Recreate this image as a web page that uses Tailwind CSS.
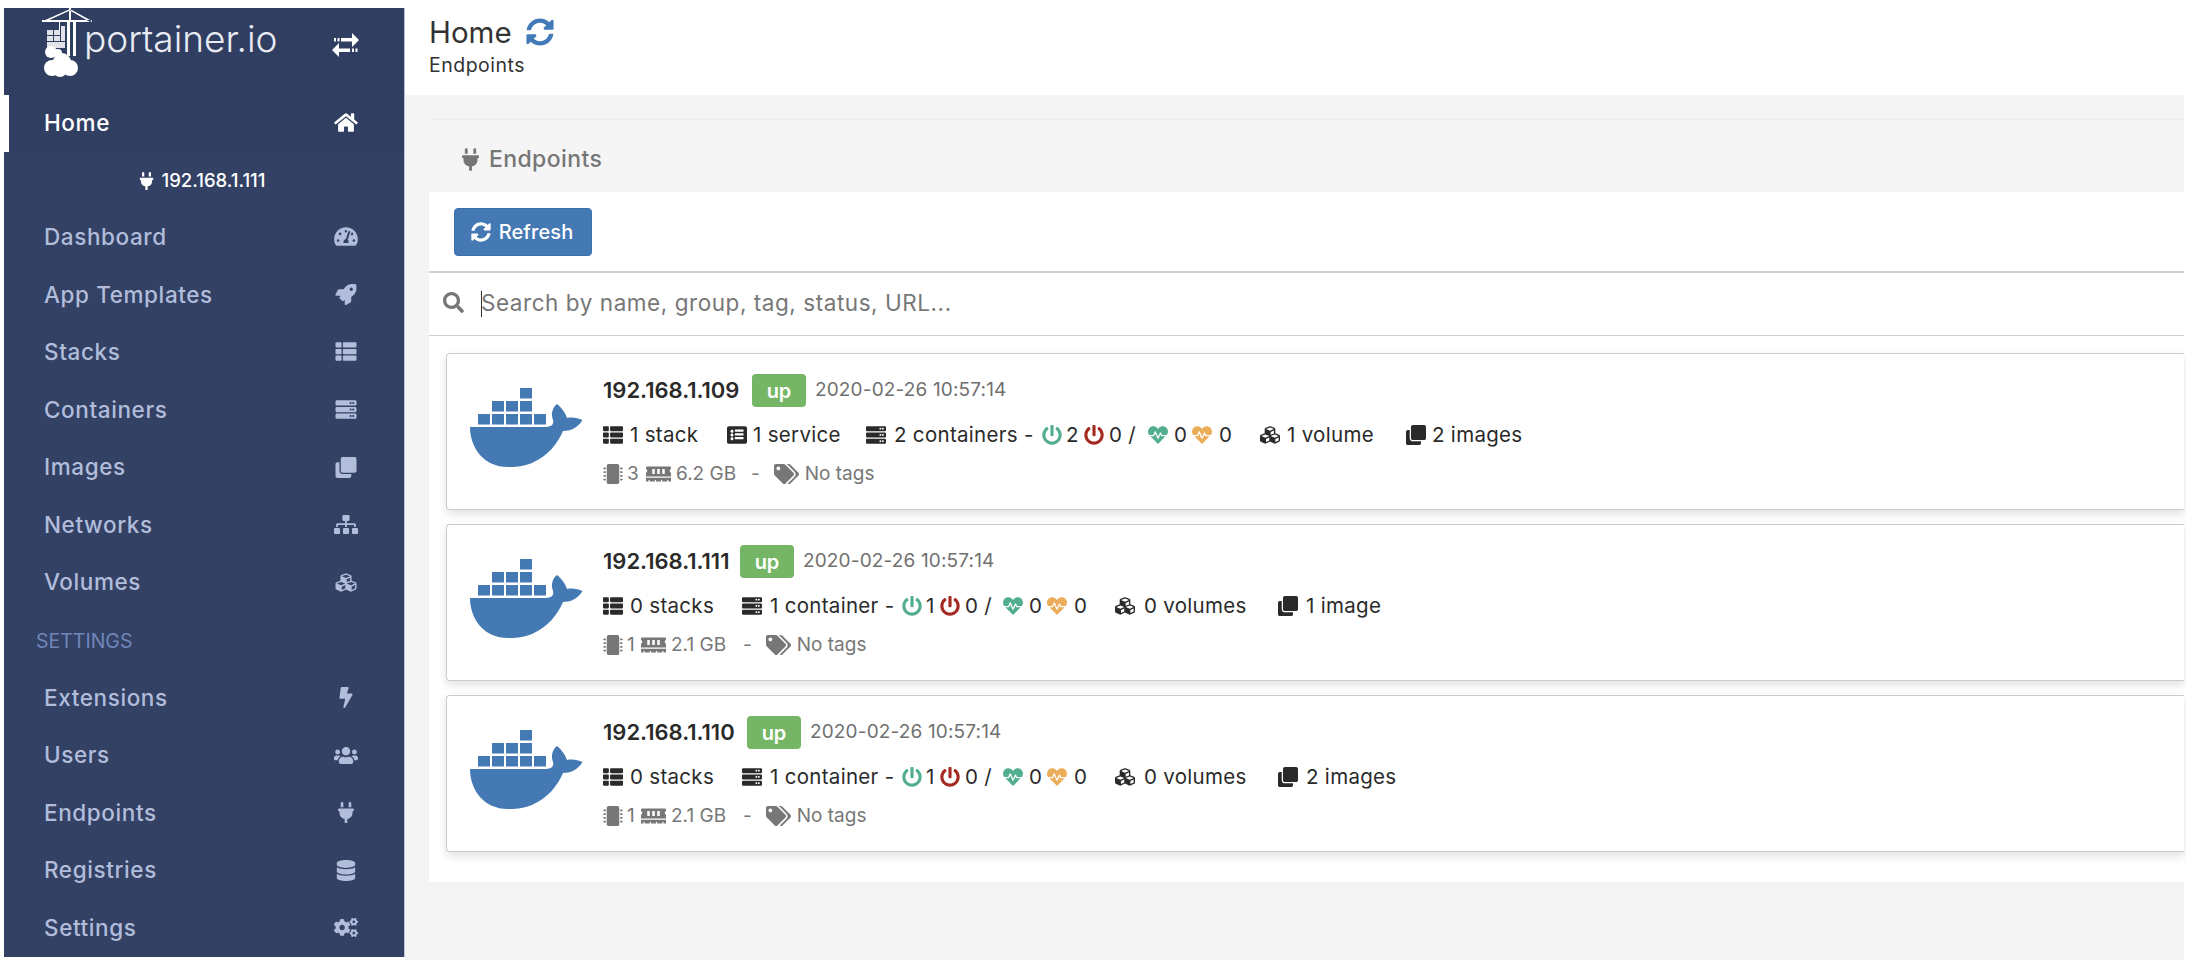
<!DOCTYPE html>
<html lang="en">
<head>
<meta charset="UTF-8">
<title>Portainer</title>
<script src="https://cdn.jsdelivr.net/npm/@tailwindcss/browser@4"></script>
</head>
<body class="bg-white [font-family:Inter,sans-serif] overflow-hidden">
<!-- icon sprite -->
<svg class="hidden">
<symbol id="home" viewBox="0 0 576 512"><path d="M280.37 148.26L96 300.11V464a16 16 0 0 0 16 16l112.06-.29a16 16 0 0 0 15.92-16V368a16 16 0 0 1 16-16h64a16 16 0 0 1 16 16v95.64a16 16 0 0 0 16 16.05L464 480a16 16 0 0 0 16-16V300L295.67 148.26a12.19 12.19 0 0 0-15.3 0zM571.6 251.47L488 182.56V44.05a12 12 0 0 0-12-12h-56a12 12 0 0 0-12 12v72.61L318.47 43a48 48 0 0 0-61 0L4.34 251.47a12 12 0 0 0-1.6 16.9l25.5 31A12 12 0 0 0 45.15 301l235.22-193.74a12.19 12.19 0 0 1 15.3 0L530.9 301a12 12 0 0 0 16.9-1.6l25.5-31a12 12 0 0 0-1.7-16.93z"/></symbol>
<symbol id="plug" viewBox="0 0 384 512"><path d="M320,32a32,32,0,0,0-64,0v96h64Zm48,128H16A16,16,0,0,0,0,176v32a16,16,0,0,0,16,16H32v32A160.07,160.07,0,0,0,160,412.8V512h64V412.8A160.07,160.07,0,0,0,352,256V224h16a16,16,0,0,0,16-16V176A16,16,0,0,0,368,160ZM128,32a32,32,0,0,0-64,0v96h64Z"/></symbol>
<symbol id="sync" viewBox="0 0 512 512"><path d="M370.72 133.28C339.458 104.008 298.888 87.962 255.848 88c-77.458.068-144.328 53.178-162.791 126.85-1.344 5.363-6.122 9.15-11.651 9.15H24.103c-7.498 0-13.194-6.807-11.807-14.176C33.933 94.924 134.813 8 256 8c66.448 0 126.791 26.136 171.315 68.685L463.03 40.97C478.149 25.851 504 36.559 504 57.941V192c0 13.255-10.745 24-24 24H345.941c-21.382 0-32.09-25.851-16.971-40.971l41.75-41.749zM32 296h134.059c21.382 0 32.09 25.851 16.971 40.971l-41.75 41.75c31.262 29.273 71.835 45.319 114.876 45.28 77.418-.07 144.315-53.144 162.787-126.849 1.344-5.363 6.122-9.15 11.651-9.15h57.304c7.498 0 13.194 6.807 11.807 14.176C478.067 417.076 377.187 504 256 504c-66.448 0-126.791-26.136-171.315-68.685L48.97 471.03C33.851 486.149 8 475.441 8 454.059V320c0-13.255 10.745-24 24-24z"/></symbol>
<symbol id="search" viewBox="0 0 512 512"><path d="M505 442.7L405.3 343c-4.5-4.5-10.6-7-17-7H372c27.6-35.3 44-79.7 44-128C416 93.1 322.9 0 208 0S0 93.1 0 208s93.1 208 208 208c48.3 0 92.7-16.4 128-44v16.3c0 6.4 2.5 12.5 7 17l99.7 99.7c9.4 9.4 24.6 9.4 33.9 0l28.3-28.3c9.4-9.4 9.4-24.6.1-34zM208 336c-70.7 0-128-57.2-128-128 0-70.7 57.2-128 128-128 70.7 0 128 57.2 128 128 0 70.7-57.2 128-128 128z"/></symbol>
<symbol id="thlist" viewBox="0 0 512 512"><path d="M149.333 216v80c0 13.255-10.745 24-24 24H24c-13.255 0-24-10.745-24-24v-80c0-13.255 10.745-24 24-24h101.333c13.255 0 24 10.745 24 24zM0 376v80c0 13.255 10.745 24 24 24h101.333c13.255 0 24-10.745 24-24v-80c0-13.255-10.745-24-24-24H24c-13.255 0-24 10.745-24 24zM125.333 32H24C10.745 32 0 42.745 0 56v80c0 13.255 10.745 24 24 24h101.333c13.255 0 24-10.745 24-24V56c0-13.255-10.745-24-24-24zm80 448H488c13.255 0 24-10.745 24-24v-80c0-13.255-10.745-24-24-24H205.333c-13.255 0-24 10.745-24 24v80c0 13.255 10.745 24 24 24zm-24-424v80c0 13.255 10.745 24 24 24H488c13.255 0 24-10.745 24-24V56c0-13.255-10.745-24-24-24H205.333c-13.255 0-24 10.745-24 24zm24 264H488c13.255 0 24-10.745 24-24v-80c0-13.255-10.745-24-24-24H205.333c-13.255 0-24 10.745-24 24v80c0 13.255 10.745 24 24 24z"/></symbol>
<symbol id="server" viewBox="0 0 512 512"><path d="M480 160H32c-17.673 0-32-14.327-32-32V64c0-17.673 14.327-32 32-32h448c17.673 0 32 14.327 32 32v64c0 17.673-14.327 32-32 32zm-48-88c-13.255 0-24 10.745-24 24s10.745 24 24 24 24-10.745 24-24-10.745-24-24-24zm-64 0c-13.255 0-24 10.745-24 24s10.745 24 24 24 24-10.745 24-24-10.745-24-24-24zm112 248H32c-17.673 0-32-14.327-32-32v-64c0-17.673 14.327-32 32-32h448c17.673 0 32 14.327 32 32v64c0 17.673-14.327 32-32 32zm-48-88c-13.255 0-24 10.745-24 24s10.745 24 24 24 24-10.745 24-24-10.745-24-24-24zm-64 0c-13.255 0-24 10.745-24 24s10.745 24 24 24 24-10.745 24-24-10.745-24-24-24zm112 248H32c-17.673 0-32-14.327-32-32v-64c0-17.673 14.327-32 32-32h448c17.673 0 32 14.327 32 32v64c0 17.673-14.327 32-32 32zm-48-88c-13.255 0-24 10.745-24 24s10.745 24 24 24 24-10.745 24-24-10.745-24-24-24zm-64 0c-13.255 0-24 10.745-24 24s10.745 24 24 24 24-10.745 24-24-10.745-24-24-24z"/></symbol>
<symbol id="clone" viewBox="0 0 512 512"><path d="M464 0c26.51 0 48 21.49 48 48v288c0 26.51-21.49 48-48 48H176c-26.51 0-48-21.49-48-48V48c0-26.51 21.49-48 48-48h288M176 416c-44.112 0-80-35.888-80-80V128H48c-26.51 0-48 21.49-48 48v288c0 26.51 21.49 48 48 48h288c26.51 0 48-21.49 48-48v-48H176z"/></symbol>
<symbol id="sitemap" viewBox="0 0 640 512"><path d="M128 352H32c-17.67 0-32 14.33-32 32v96c0 17.67 14.33 32 32 32h96c17.67 0 32-14.33 32-32v-96c0-17.67-14.33-32-32-32zm-24-80h192v48h48v-48h192v48h48v-57.59c0-21.17-17.23-38.41-38.41-38.41H344v-64h40c17.67 0 32-14.33 32-32V32c0-17.67-14.33-32-32-32H256c-17.67 0-32 14.33-32 32v96c0 17.67 14.33 32 32 32h40v64H94.41C73.23 224 56 241.23 56 262.41V320h48v-48zm264 80h-96c-17.67 0-32 14.33-32 32v96c0 17.67 14.33 32 32 32h96c17.67 0 32-14.33 32-32v-96c0-17.67-14.33-32-32-32zm240 0h-96c-17.67 0-32 14.33-32 32v96c0 17.67 14.33 32 32 32h96c17.67 0 32-14.33 32-32v-96c0-17.67-14.33-32-32-32z"/></symbol>
<symbol id="bolt" viewBox="0 0 320 512"><path d="M296 160H180.6l42.6-129.8C227.2 15 215.7 0 200 0H56C44 0 33.8 8.9 32.2 20.8l-32 240C-1.7 275.2 9.5 288 24 288h118.7L96.6 482.5c-3.6 15.2 8 29.5 23.3 29.5 8.4 0 16.4-4.4 20.8-12l176-304c9.3-15.9-2.2-36-20.7-36z"/></symbol>
<symbol id="users" viewBox="0 0 640 512"><path d="M96 224c35.3 0 64-28.7 64-64s-28.7-64-64-64-64 28.7-64 64 28.7 64 64 64zm448 0c35.3 0 64-28.7 64-64s-28.7-64-64-64-64 28.7-64 64 28.7 64 64 64zm32 32h-64c-17.6 0-33.5 7.1-45.1 18.6 40.3 22.1 68.9 62 75.1 109.4h66c17.7 0 32-14.3 32-32v-32c0-35.3-28.7-64-64-64zm-256 0c61.9 0 112-50.1 112-112S381.9 32 320 32 208 82.1 208 144s50.1 112 112 112zm76.8 32h-8.3c-20.8 10-43.9 16-68.5 16s-47.6-6-68.5-16h-8.3C179.6 288 128 339.6 128 403.2V432c0 26.5 21.5 48 48 48h288c26.5 0 48-21.5 48-48v-28.8c0-63.6-51.6-115.2-115.2-115.2zm-223.7-13.4C161.5 263.1 145.6 256 128 256H64c-35.3 0-64 28.7-64 64v32c0 17.7 14.3 32 32 32h65.9c6.3-47.4 34.9-87.3 75.2-109.4z"/></symbol>
<symbol id="database" viewBox="0 0 448 512"><path d="M448 73.143v45.714C448 159.143 347.667 192 224 192S0 159.143 0 118.857V73.143C0 32.857 100.333 0 224 0s224 32.857 224 73.143zM448 176v102.857C448 319.143 347.667 352 224 352S0 319.143 0 278.857V176c48.125 33.143 136.208 48.572 224 48.572S399.874 209.143 448 176zm0 160v102.857C448 479.143 347.667 512 224 512S0 479.143 0 438.857V336c48.125 33.143 136.208 48.572 224 48.572S399.874 369.143 448 336z"/></symbol>
<symbol id="rocket" viewBox="0 0 512 512"><path d="M505.05 19.1a15.89 15.89 0 0 0-12.2-12.2C460.65 0 435.46 0 410.36 0c-103.2 0-165.1 55.2-211.29 128H94.87A48 48 0 0 0 52 154.49l-49.42 98.8A24 24 0 0 0 24.07 288h103.77l-22.47 22.47a32 32 0 0 0 0 45.25l50.9 50.91a32 32 0 0 0 45.26 0L224 384.16V488a24 24 0 0 0 34.7 21.49l98.7-49.39a47.91 47.91 0 0 0 26.5-42.9V312.79c72.59-46.3 128-108.4 128-211.09.1-25.2.1-50.4-6.85-82.6zM384 168a40 40 0 1 1 40-40 40 40 0 0 1-40 40z"/></symbol>
<symbol id="tacho" viewBox="0 0 576 512"><path d="M288 32C128.94 32 0 160.94 0 320c0 52.8 14.25 102.26 39.06 144.8 5.61 9.62 16.3 15.2 27.44 15.2h443c11.14 0 21.83-5.58 27.44-15.2C561.75 422.26 576 372.8 576 320c0-159.06-128.94-288-288-288zm0 64c14.71 0 26.58 10.13 30.32 23.65-1.11 2.26-2.64 4.23-3.45 6.67l-9.22 27.67c-5.13 3.49-10.97 6.01-17.64 6.01-17.67 0-32-14.33-32-32S270.33 96 288 96zM96 384c-17.67 0-32-14.33-32-32s14.33-32 32-32 32 14.33 32 32-14.33 32-32 32zm48-160c-17.67 0-32-14.33-32-32s14.33-32 32-32 32 14.33 32 32-14.33 32-32 32zm246.77-72.41l-61.33 184C343.13 347.33 352 364.54 352 384c0 11.72-3.38 22.55-8.88 32H232.88c-5.5-9.45-8.88-20.28-8.88-32 0-33.94 26.5-61.43 59.9-63.59l61.34-184.01c4.17-12.56 17.73-19.45 30.36-15.17 12.57 4.19 19.35 17.79 15.17 30.36zm14.66 57.2l15.52-46.55c3.47-1.29 7.13-2.23 11.05-2.23 17.67 0 32 14.33 32 32s-14.33 32-32 32c-11.38-.01-20.89-6.28-26.57-15.22zM480 384c-17.67 0-32-14.33-32-32s14.33-32 32-32 32 14.33 32 32-14.33 32-32 32z"/></symbol>
<symbol id="cubes" viewBox="0 0 512 512"><path d="M488.6 250.2L392 214V105.5c0-15-9.3-28.4-23.4-33.7l-100-37.5c-8.1-3.1-17.1-3.1-25.3 0l-100 37.5c-14.1 5.3-23.4 18.7-23.4 33.7V214l-96.6 36.2C9.3 255.5 0 268.9 0 283.9V394c0 13.6 7.7 26.1 19.9 32.2l100 50c10.1 5.1 22.1 5.1 32.2 0l103.9-52 103.9 52c10.1 5.1 22.1 5.1 32.2 0l100-50c12.2-6.1 19.9-18.6 19.9-32.2V283.9c0-15-9.3-28.4-23.4-33.7zM358 214.8l-85 31.9v-68.2l85-37v73.3zM154 104.1l102-38.2 102 38.2v.6l-102 41.4-102-41.4v-.6zm84 291.1l-85 42.5v-79.1l85-38.8v75.4zm0-112l-102 41.4-102-41.4v-.6l102-38.2 102 38.2v.6zm240 112l-85 42.5v-79.1l85-38.8v75.4zm0-112l-102 41.4-102-41.4v-.6l102-38.2 102 38.2v.6z"/></symbol>
<symbol id="cogs" viewBox="0 0 640 512"><path d="M512.1 191l-8.2 14.3c-3 5.3-9.4 7.5-15.1 5.4-11.8-4.4-22.6-10.7-32.1-18.6-4.6-3.8-5.8-10.5-2.8-15.7l8.2-14.3c-6.9-8-12.3-17.3-15.9-27.4h-16.5c-6 0-11.2-4.3-12.2-10.3-2-12-2.1-24.6 0-37.1 1-6 6.2-10.4 12.2-10.4h16.5c3.6-10.1 9-19.4 15.9-27.4l-8.2-14.3c-3-5.2-1.9-11.9 2.8-15.7 9.5-7.9 20.4-14.2 32.1-18.6 5.7-2.1 12.1.1 15.1 5.4l8.2 14.3c10.5-1.9 21.2-1.9 31.7 0L552 6.3c3-5.3 9.4-7.5 15.1-5.4 11.8 4.4 22.6 10.7 32.1 18.6 4.6 3.8 5.8 10.5 2.8 15.7l-8.2 14.3c6.9 8 12.3 17.3 15.9 27.4h16.5c6 0 11.2 4.3 12.2 10.3 2 12 2.1 24.6 0 37.1-1 6-6.2 10.4-12.2 10.4h-16.5c-3.6 10.1-9 19.4-15.9 27.4l8.2 14.3c3 5.2 1.9 11.9-2.8 15.7-9.5 7.9-20.4 14.2-32.1 18.6-5.7 2.1-12.1-.1-15.1-5.4l-8.2-14.3c-10.4 1.9-21.2 1.9-31.7 0zm-10.5-58.8c38.5 29.6 82.4-14.3 52.8-52.8-38.5-29.7-82.4 14.3-52.8 52.8zM386.3 286.1l33.7 16.8c10.1 5.8 14.5 18.1 10.5 29.1-8.9 24.2-26.4 46.4-42.6 65.8-7.4 8.9-20.2 11.1-30.3 5.3l-29.1-16.8c-16 13.7-34.6 24.6-54.9 31.7v33.6c0 11.6-8.3 21.6-19.7 23.6-24.6 4.2-50.4 4.4-75.9 0-11.5-2-20-11.9-20-23.6V418c-20.3-7.2-38.9-18-54.9-31.7L74 403c-10 5.8-22.9 3.6-30.3-5.3-16.2-19.4-33.3-41.6-42.2-65.7-4-10.9.4-23.2 10.5-29.1l33.3-16.8c-3.9-20.9-3.9-42.4 0-63.4L12 205.8c-10.1-5.8-14.6-18.1-10.5-29 8.9-24.2 26-46.4 42.2-65.8 7.4-8.9 20.2-11.1 30.3-5.3l29.1 16.8c16-13.7 34.6-24.6 54.9-31.7V57.1c0-11.5 8.2-21.5 19.6-23.5 24.6-4.2 50.5-4.4 76-.1 11.5 2 20 11.9 20 23.6v33.6c20.3 7.2 38.9 18 54.9 31.7l29.1-16.8c10-5.8 22.9-3.6 30.3 5.3 16.2 19.4 33.2 41.6 42.1 65.8 4 10.9.1 23.2-10 29.1l-33.7 16.8c3.9 21 3.9 42.5 0 63.5zm-117.6 21.1c59.2-77-28.7-164.9-105.7-105.7-59.2 77 28.7 164.9 105.7 105.7zm243.4 182.7l-8.2 14.3c-3 5.3-9.4 7.5-15.1 5.4-11.8-4.4-22.6-10.7-32.1-18.6-4.6-3.8-5.8-10.5-2.8-15.7l8.2-14.3c-6.9-8-12.3-17.3-15.9-27.4h-16.5c-6 0-11.2-4.3-12.2-10.3-2-12-2.1-24.6 0-37.1 1-6 6.2-10.4 12.2-10.4h16.5c3.6-10.1 9-19.4 15.9-27.4l-8.2-14.3c-3-5.2-1.9-11.9 2.8-15.7 9.5-7.9 20.4-14.2 32.1-18.6 5.7-2.1 12.1.1 15.1 5.4l8.2 14.3c10.5-1.9 21.2-1.9 31.7 0l8.2-14.3c3-5.3 9.4-7.5 15.1-5.4 11.8 4.4 22.6 10.7 32.1 18.6 4.6 3.8 5.8 10.5 2.8 15.7l-8.2 14.3c6.9 8 12.3 17.3 15.9 27.4h16.5c6 0 11.2 4.3 12.2 10.3 2 12 2.1 24.6 0 37.1-1 6-6.2 10.4-12.2 10.4h-16.5c-3.6 10.1-9 19.4-15.9 27.4l8.2 14.3c3 5.2 1.9 11.9-2.8 15.7-9.5 7.9-20.4 14.2-32.1 18.6-5.7 2.1-12.1-.1-15.1-5.4l-8.2-14.3c-10.4 1.9-21.2 1.9-31.7 0zM501.6 431c38.5 29.6 82.4-14.3 52.8-52.8-38.5-29.6-82.4 14.3-52.8 52.8z"/></symbol>
<symbol id="power" viewBox="0 0 512 512"><path d="M400 54.1c63 45 104 118.6 104 201.9 0 136.8-110.8 247.7-247.5 248C120 504.3 8.2 393 8 256.4 7.9 173.1 48.9 99.3 111.8 54.2c11.7-8.3 28-4.8 35 7.7L162.6 90c5.9 10.5 3.1 23.8-6.6 31-41.5 30.8-68 79.6-68 134.9-.1 92.3 74.5 168.1 168 168.1 91.6 0 168.6-74.2 168-169.1-.3-51.8-24.7-101.8-68.1-134-9.7-7.2-12.4-20.5-6.5-30.9l15.8-28.1c7-12.4 23.2-16.1 34.8-7.8zM296 264V24c0-13.3-10.7-24-24-24h-32c-13.3 0-24 10.7-24 24v240c0 13.3 10.7 24 24 24h32c13.3 0 24-10.7 24-24z"/></symbol>
<symbol id="heart" viewBox="0 0 512 512"><path d="M320.2 243.8l-49.7 99.4c-6 12.1-23.4 11.7-28.9-.6l-56.9-126.3-30 71.7H60.6l182.5 186.5c7.1 7.3 18.6 7.3 25.7 0L451.4 288H342.3l-22.1-44.2zM473.7 73.9l-2.4-2.5c-51.5-52.6-135.8-52.6-187.4 0L256 100l-27.9-28.5c-51.5-52.7-135.9-52.7-187.4 0l-2.4 2.4C-10.4 123.7-12.5 203 31 256h102.4l35.9-86.2c5.4-12.9 23.6-13.2 29.4-.4l58.2 129.3 49-97.9c5.9-11.8 22.7-11.8 28.6 0l27.6 55.2H481c43.5-53 41.4-132.3-7.3-182.1z"/></symbol>
<symbol id="tags" viewBox="0 0 640 512"><path d="M497.941 225.941L286.059 14.059A48 48 0 0 0 252.118 0H48C21.49 0 0 21.49 0 48v204.118a48 48 0 0 0 14.059 33.941l211.882 211.882c18.744 18.745 49.136 18.746 67.882 0l204.118-204.118c18.745-18.745 18.745-49.137 0-67.882zM112 160c-26.51 0-48-21.49-48-48s21.49-48 48-48 48 21.49 48 48-21.49 48-48 48zm513.941 133.823L421.823 497.941c-18.745 18.745-49.137 18.745-67.882 0l-.36-.36L527.64 323.522c16.999-16.999 26.36-39.6 26.36-63.64s-9.362-46.641-26.36-63.64L331.397 0h48.721a48 48 0 0 1 33.941 14.059l211.882 211.882c18.745 18.745 18.745 49.137 0 67.882z"/></symbol>
<symbol id="chip" viewBox="0 0 512 512"><path d="M416 48v416c0 26.51-21.49 48-48 48H144c-26.51 0-48-21.49-48-48V48c0-26.51 21.49-48 48-48h224c26.51 0 48 21.49 48 48zm96 58v12a6 6 0 0 1-6 6h-18v6a6 6 0 0 1-6 6h-42V88h42a6 6 0 0 1 6 6v6h18a6 6 0 0 1 6 6zm0 96v12a6 6 0 0 1-6 6h-18v6a6 6 0 0 1-6 6h-42v-48h42a6 6 0 0 1 6 6v6h18a6 6 0 0 1 6 6zm0 96v12a6 6 0 0 1-6 6h-18v6a6 6 0 0 1-6 6h-42v-48h42a6 6 0 0 1 6 6v6h18a6 6 0 0 1 6 6zm0 96v12a6 6 0 0 1-6 6h-18v6a6 6 0 0 1-6 6h-42v-48h42a6 6 0 0 1 6 6v6h18a6 6 0 0 1 6 6zM30 376h42v48H30a6 6 0 0 1-6-6v-6H6a6 6 0 0 1-6-6v-12a6 6 0 0 1 6-6h18v-6a6 6 0 0 1 6-6zm0-96h42v48H30a6 6 0 0 1-6-6v-6H6a6 6 0 0 1-6-6v-12a6 6 0 0 1 6-6h18v-6a6 6 0 0 1 6-6zm0-96h42v48H30a6 6 0 0 1-6-6v-6H6a6 6 0 0 1-6-6v-12a6 6 0 0 1 6-6h18v-6a6 6 0 0 1 6-6zm0-96h42v48H30a6 6 0 0 1-6-6v-6H6a6 6 0 0 1-6-6v-12a6 6 0 0 1 6-6h18v-6a6 6 0 0 1 6-6z"/></symbol>
<symbol id="memory" viewBox="0 0 640 512"><path d="M640 130.94V96c0-17.67-14.33-32-32-32H32C14.33 64 0 78.33 0 96v34.94c18.6 6.61 32 24.19 32 45.06s-13.4 38.45-32 45.06V320h640v-98.94c-18.6-6.61-32-24.19-32-45.06s13.4-38.45 32-45.06zM224 256h-64V128h64v128zm128 0h-64V128h64v128zm128 0h-64V128h64v128zM0 448h64v-26.67c0-8.84 7.16-16 16-16s16 7.16 16 16V448h128v-26.67c0-8.84 7.16-16 16-16s16 7.16 16 16V448h128v-26.67c0-8.84 7.16-16 16-16s16 7.16 16 16V448h128v-26.67c0-8.84 7.16-16 16-16s16 7.16 16 16V448h64v-96H0v96z"/></symbol>
<symbol id="listalt" viewBox="0 0 512 512"><path d="M464 480H48c-26.51 0-48-21.49-48-48V80c0-26.51 21.49-48 48-48h416c26.51 0 48 21.49 48 48v352c0 26.51-21.49 48-48 48zM128 120c-22.091 0-40 17.909-40 40s17.909 40 40 40 40-17.909 40-40-17.909-40-40-40zm0 96c-22.091 0-40 17.909-40 40s17.909 40 40 40 40-17.909 40-40-17.909-40-40-40zm0 96c-22.091 0-40 17.909-40 40s17.909 40 40 40 40-17.909 40-40-17.909-40-40-40zm296-152v-32c0-6.627-5.373-12-12-12H212c-6.627 0-12 5.373-12 12v32c0 6.627 5.373 12 12 12h200c6.627 0 12-5.373 12-12zm0 96v-32c0-6.627-5.373-12-12-12H212c-6.627 0-12 5.373-12 12v32c0 6.627 5.373 12 12 12h200c6.627 0 12-5.373 12-12zm0 96v-32c0-6.627-5.373-12-12-12H212c-6.627 0-12 5.373-12 12v32c0 6.627 5.373 12 12 12h200c6.627 0 12-5.373 12-12z"/></symbol>
<symbol id="whale" viewBox="0 0 113 80"><path d="M0 39H76C82 39 84 36 83 32C80 25 84 18 87 16C92 20 96 26 97 30C103 29 108 30 112.500 32C108 40 100 43 93 43C88 55 78 68 62 75C52 79 44 79 38 79C14 79 0 60 0 39Z"/><path d="M8 26h12v10.500H8zM22 26h12v10.500H22zM36 26h12v10.500H36zM50 26h12v10.500H50zM64 26h12v10.500H64zM22 13h12v10.500H22zM36 13h12v10.500H36zM50 13h12v10.500H50zM50 0h12v10.500H50z"/></symbol>
</svg>

<div class="flex h-[960px] w-[2186px] pl-1 pr-[2px]">
  <!-- Sidebar -->
  <div class="mt-2 h-[949px] w-[401px] shrink-0 self-start border-r border-[#b9c2d4] bg-[#334165] text-[#b1bdda]">
    <div class="flex h-[87px] items-start justify-between bg-[#303e62] pr-[45px]">
      <div class="flex">
        <svg class="ml-[38px] h-[70px] w-[50px] text-white" viewBox="0 0 50 70" fill="currentColor">
          <path d="M27 0h2v14h-2zM0 12h52v2H0zM1 13 28 1l1 1L3 14zM50 13 28 1l-1 1 21 12zM25 14h3v34h-3zM31 14h3v34h-3zM17 14h1v8h-1z"/>
          <path d="M5 22h6v5H5zM12 22h6v5h-6zM5 28h6v5H5zM12 28h6v5h-6zM19 18h4v15h-4zM5 34h18v6H5z" opacity=".85"/>
          <circle cx="9" cy="44" r="6"/><circle cx="16" cy="45" r="4"/>
          <circle cx="10" cy="60" r="8"/><circle cx="20" cy="54" r="9"/><circle cx="28" cy="60" r="8"/><circle cx="18" cy="62" r="7"/>
        </svg>
        <span class="mt-[8px] ml-[-8px] text-[37px] leading-[46px] font-light text-[#e8ebf2]">portainer.io</span>
      </div>
      <svg class="mt-[25px] h-6 w-[27px] text-white" viewBox="0 0 27 24" fill="currentColor">
        <path d="M2 5h2v3.500H2zM5.500 5h2v3.500h-2zM9 5h11V0l7 7-7 7V8.500H9zM7 15.500h11V19H7v5l-7-7 7-7zM20 15.500h2V19h-2zM23.500 15.500h2V19h-2z"/>
      </svg>
    </div>
    <a class="flex h-[57px] items-center justify-between border-l-[5px] border-white bg-[#303e62] pr-[46px] pb-[2px] pl-[35px] text-[22.500px] tracking-[0.6px] font-medium text-white"><span>Home</span><svg class="h-[21px] w-6 fill-current"><use href="#home"/></svg></a>
    <div class="flex h-[56px] items-center justify-center gap-2 pr-[4px] pt-[2px] text-[18.500px] font-medium text-white"><svg class="h-[18px] w-[15px] fill-current"><use href="#plug"/></svg><span>192.168.1.111</span></div>
    <nav class="text-[22.500px] tracking-[0.6px] font-medium">
      <a class="flex h-[57.6px] items-center justify-between pr-[46px] pl-[40px]"><span>Dashboard</span><svg class="h-[21px] w-6 fill-current"><use href="#tacho"/></svg></a>
      <a class="flex h-[57.6px] items-center justify-between pr-[46px] pl-[40px]"><span>App Templates</span><svg class="h-[21px] w-6 fill-current"><use href="#rocket"/></svg></a>
      <a class="flex h-[57.6px] items-center justify-between pr-[46px] pl-[40px]"><span>Stacks</span><svg class="h-[21px] w-6 fill-current"><use href="#thlist"/></svg></a>
      <a class="flex h-[57.6px] items-center justify-between pr-[46px] pl-[40px]"><span>Containers</span><svg class="h-[21px] w-6 fill-current"><use href="#server"/></svg></a>
      <a class="flex h-[57.6px] items-center justify-between pr-[46px] pl-[40px]"><span>Images</span><svg class="h-[21px] w-6 fill-current"><use href="#clone"/></svg></a>
      <a class="flex h-[57.6px] items-center justify-between pr-[46px] pl-[40px]"><span>Networks</span><svg class="h-[21px] w-6 fill-current"><use href="#sitemap"/></svg></a>
      <a class="flex h-[57.6px] items-center justify-between pr-[46px] pl-[40px]"><span>Volumes</span><svg class="h-[21px] w-6 fill-current"><use href="#cubes"/></svg></a>
      <div class="flex h-[57.6px] items-center pt-1 pl-[32px] text-[19.500px] tracking-normal font-normal text-[#7086ba]">SETTINGS</div>
      <a class="flex h-[57.6px] items-center justify-between pr-[46px] pl-[40px]"><span>Extensions</span><svg class="h-[21px] w-6 fill-current"><use href="#bolt"/></svg></a>
      <a class="flex h-[57.6px] items-center justify-between pr-[46px] pl-[40px]"><span>Users</span><svg class="h-[21px] w-6 fill-current"><use href="#users"/></svg></a>
      <a class="flex h-[57.6px] items-center justify-between pr-[46px] pl-[40px]"><span>Endpoints</span><svg class="h-[21px] w-6 fill-current"><use href="#plug"/></svg></a>
      <a class="flex h-[57.6px] items-center justify-between pr-[46px] pl-[40px]"><span>Registries</span><svg class="h-[21px] w-6 fill-current"><use href="#database"/></svg></a>
      <a class="flex h-[57.6px] items-center justify-between pr-[46px] pl-[40px]"><span>Settings</span><svg class="h-[21px] w-6 fill-current"><use href="#cogs"/></svg></a>
    </nav>
  </div>

  <!-- Main -->
  <div class="flex min-w-0 flex-1 flex-col">
    <div class="h-[95px] pt-[15px] pl-[24px]">
      <div class="flex items-center gap-[14px] text-[29.500px] leading-[34px] text-[#333]">Home<svg class="h-[28px] w-[28px] fill-[#4279b7]"><use href="#sync"/></svg></div>
      <div class="mt-[3px] text-[19.500px] leading-[26px] tracking-[0.5px] text-[#333]">Endpoints</div>
    </div>
    <div class="flex-1 bg-[#f4f4f4] pt-6 pl-6">
      <div class="h-[763px] bg-white">
        <div class="flex h-[73px] items-center gap-[10px] border-t border-[#ececec] bg-[#f5f5f5] pt-[6px] pl-[33px] text-[23px] tracking-[0.4px] font-medium text-[#767676]"><svg class="h-[23px] w-[17px] fill-current"><use href="#plug"/></svg>Endpoints</div>
        <div class="flex h-[81px] items-start border-b-2 border-[#d2d2d2] pt-4 pl-[25px]">
          <button class="flex h-12 w-[138px] items-center justify-center gap-2 rounded border border-[#3b6fa8] bg-[#4479b3] pr-[2px] text-[20px] tracking-[0.1px] font-medium text-white"><svg class="h-[20px] w-[20px] fill-current"><use href="#sync"/></svg>Refresh</button>
        </div>
        <div class="relative flex h-[63px] items-center gap-[17px] border-b border-[#cfcfcf] pb-[3px] pl-[14px]">
          <svg class="h-[21px] w-[21px] shrink-0 fill-[#777]"><use href="#search"/></svg>
          <input class="w-full text-[22.500px] tracking-[0.55px] outline-none placeholder:text-[#777]" placeholder="Search by name, group, tag, status, URL...">
          <span class="absolute top-[18px] left-[52px] h-[26px] w-px bg-[#333]"></span>
        </div>
        <div class="flex flex-col gap-[14px] pt-[17px] pl-[17px]">
          <!-- card 1 -->
          <div class="flex h-[157px] rounded-l border border-r-0 border-[#cccccc] bg-white pt-[34px] pl-[23px] shadow-[0_4px_10px_rgba(0,0,0,0.12)]">
            <svg class="h-20 w-[113px] shrink-0 fill-[#4479b3]"><use href="#whale"/></svg>
            <div class="ml-5 text-[#2a2a2a]">
              <div class="mt-[-14px] flex h-[33px] items-center">
                <span class="w-[136px] text-[22px] font-semibold">192.168.1.109</span>
                <span class="ml-[13px] flex h-[33px] w-[54px] items-center justify-center rounded bg-[#74b566] text-[20px] font-semibold text-white">up</span>
                <span class="ml-[9px] text-[19px] tracking-[0.15px] text-[#6f6f6f]">2020-02-26 10:57:14</span>
              </div>
              <div class="mt-[16px] flex h-6 items-center text-[20.500px] tracking-[0.3px] whitespace-nowrap">
                <svg class="mr-[7px] h-5 w-5 fill-current"><use href="#thlist"/></svg><span class="w-[72px]">1 stack</span>
                <svg class="ml-[25px] mr-[6px] h-5 w-5 fill-current"><use href="#listalt"/></svg><span class="w-[87px]">1 service</span>
                <svg class="ml-[26px] mr-[8px] h-5 w-5 fill-current"><use href="#server"/></svg><span class="w-[139px]">2 containers -</span>
                <svg class="mr-[4px] ml-[9px] h-5 w-5 fill-[#52ae8e]"><use href="#power"/></svg><span class="w-3">2</span>
                <svg class="mr-[5px] ml-[6px] h-5 w-5 fill-[#a52a22]"><use href="#power"/></svg><span class="w-[29px]">0 /</span>
                <svg class="mr-[6px] ml-[10px] h-5 w-5 fill-[#52ae8e]"><use href="#heart"/></svg><span class="w-3">0</span>
                <svg class="mr-[7px] ml-[6px] h-5 w-5 fill-[#ecad5b]"><use href="#heart"/></svg><span class="w-3">0</span>
                <svg class="mr-[7px] ml-[29px] h-5 w-5 fill-current"><use href="#cubes"/></svg><span class="w-[90px]">1 volume</span>
                <svg class="mr-[6px] ml-[29px] h-5 w-5 fill-current"><use href="#clone"/></svg><span>2 images</span>
              </div>
              <div class="mt-[15px] flex h-6 items-center text-[19px] whitespace-nowrap text-[#777]">
                <svg class="mr-[4px] h-5 w-5 fill-current"><use href="#chip"/></svg><span class="w-3">3</span>
                <svg class="mr-[5px] ml-[7px] h-5 w-[25px] fill-current"><use href="#memory"/></svg><span class="w-[61px]">6.2 GB</span>
                <span class="ml-[14px]">-</span>
                <svg class="mr-[6px] ml-[14px] h-5 w-[25px] fill-current"><use href="#tags"/></svg><span>No tags</span>
              </div>
            </div>
          </div>
          <!-- card 2 -->
          <div class="flex h-[157px] rounded-l border border-r-0 border-[#cccccc] bg-white pt-[34px] pl-[23px] shadow-[0_4px_10px_rgba(0,0,0,0.12)]">
            <svg class="h-20 w-[113px] shrink-0 fill-[#4479b3]"><use href="#whale"/></svg>
            <div class="ml-5 text-[#2a2a2a]">
              <div class="mt-[-14px] flex h-[33px] items-center">
                <span class="w-[124px] text-[22px] font-semibold">192.168.1.111</span>
                <span class="ml-[13px] flex h-[33px] w-[54px] items-center justify-center rounded bg-[#74b566] text-[20px] font-semibold text-white">up</span>
                <span class="ml-[9px] text-[19px] tracking-[0.15px] text-[#6f6f6f]">2020-02-26 10:57:14</span>
              </div>
              <div class="mt-[16px] flex h-6 items-center text-[20.500px] tracking-[0.3px] whitespace-nowrap">
                <svg class="mr-[7px] h-5 w-5 fill-current"><use href="#thlist"/></svg><span class="w-[85px]">0 stacks</span>
                <svg class="ml-[27px] mr-[8px] h-5 w-5 fill-current"><use href="#server"/></svg><span class="w-[124px]">1 container -</span>
                <svg class="mr-[4px] ml-[8px] h-5 w-5 fill-[#52ae8e]"><use href="#power"/></svg><span class="w-2">1</span>
                <svg class="mr-[5px] ml-[6px] h-5 w-5 fill-[#a52a22]"><use href="#power"/></svg><span class="w-[29px]">0 /</span>
                <svg class="mr-[6px] ml-[9px] h-5 w-5 fill-[#52ae8e]"><use href="#heart"/></svg><span class="w-3">0</span>
                <svg class="mr-[7px] ml-[6px] h-5 w-5 fill-[#ecad5b]"><use href="#heart"/></svg><span class="w-3">0</span>
                <svg class="mr-[9px] ml-[29px] h-5 w-5 fill-current"><use href="#cubes"/></svg><span class="w-[106px]">0 volumes</span>
                <svg class="mr-[8px] ml-[28px] h-5 w-5 fill-current"><use href="#clone"/></svg><span>1 image</span>
              </div>
              <div class="mt-[15px] flex h-6 items-center text-[19px] whitespace-nowrap text-[#777]">
                <svg class="mr-[4px] h-5 w-5 fill-current"><use href="#chip"/></svg><span class="w-2">1</span>
                <svg class="mr-[5px] ml-[6px] h-5 w-[25px] fill-current"><use href="#memory"/></svg><span class="w-[58px]">2.1 GB</span>
                <span class="ml-[14px]">-</span>
                <svg class="mr-[6px] ml-[14px] h-5 w-[25px] fill-current"><use href="#tags"/></svg><span>No tags</span>
              </div>
            </div>
          </div>
          <!-- card 3 -->
          <div class="flex h-[157px] rounded-l border border-r-0 border-[#cccccc] bg-white pt-[34px] pl-[23px] shadow-[0_4px_10px_rgba(0,0,0,0.12)]">
            <svg class="h-20 w-[113px] shrink-0 fill-[#4479b3]"><use href="#whale"/></svg>
            <div class="ml-5 text-[#2a2a2a]">
              <div class="mt-[-14px] flex h-[33px] items-center">
                <span class="w-[130px] text-[22px] font-semibold">192.168.1.110</span>
                <span class="ml-[14px] flex h-[33px] w-[54px] items-center justify-center rounded bg-[#74b566] text-[20px] font-semibold text-white">up</span>
                <span class="ml-[9px] text-[19px] tracking-[0.15px] text-[#6f6f6f]">2020-02-26 10:57:14</span>
              </div>
              <div class="mt-[16px] flex h-6 items-center text-[20.500px] tracking-[0.3px] whitespace-nowrap">
                <svg class="mr-[7px] h-5 w-5 fill-current"><use href="#thlist"/></svg><span class="w-[85px]">0 stacks</span>
                <svg class="ml-[27px] mr-[8px] h-5 w-5 fill-current"><use href="#server"/></svg><span class="w-[124px]">1 container -</span>
                <svg class="mr-[4px] ml-[8px] h-5 w-5 fill-[#52ae8e]"><use href="#power"/></svg><span class="w-2">1</span>
                <svg class="mr-[5px] ml-[6px] h-5 w-5 fill-[#a52a22]"><use href="#power"/></svg><span class="w-[29px]">0 /</span>
                <svg class="mr-[6px] ml-[9px] h-5 w-5 fill-[#52ae8e]"><use href="#heart"/></svg><span class="w-3">0</span>
                <svg class="mr-[7px] ml-[6px] h-5 w-5 fill-[#ecad5b]"><use href="#heart"/></svg><span class="w-3">0</span>
                <svg class="mr-[9px] ml-[29px] h-5 w-5 fill-current"><use href="#cubes"/></svg><span class="w-[106px]">0 volumes</span>
                <svg class="mr-[8px] ml-[28px] h-5 w-5 fill-current"><use href="#clone"/></svg><span>2 images</span>
              </div>
              <div class="mt-[15px] flex h-6 items-center text-[19px] whitespace-nowrap text-[#777]">
                <svg class="mr-[4px] h-5 w-5 fill-current"><use href="#chip"/></svg><span class="w-2">1</span>
                <svg class="mr-[5px] ml-[6px] h-5 w-[25px] fill-current"><use href="#memory"/></svg><span class="w-[58px]">2.1 GB</span>
                <span class="ml-[14px]">-</span>
                <svg class="mr-[6px] ml-[14px] h-5 w-[25px] fill-current"><use href="#tags"/></svg><span>No tags</span>
              </div>
            </div>
          </div>
        </div>
      </div>
    </div>
  </div>
</div>
</body>
</html>
